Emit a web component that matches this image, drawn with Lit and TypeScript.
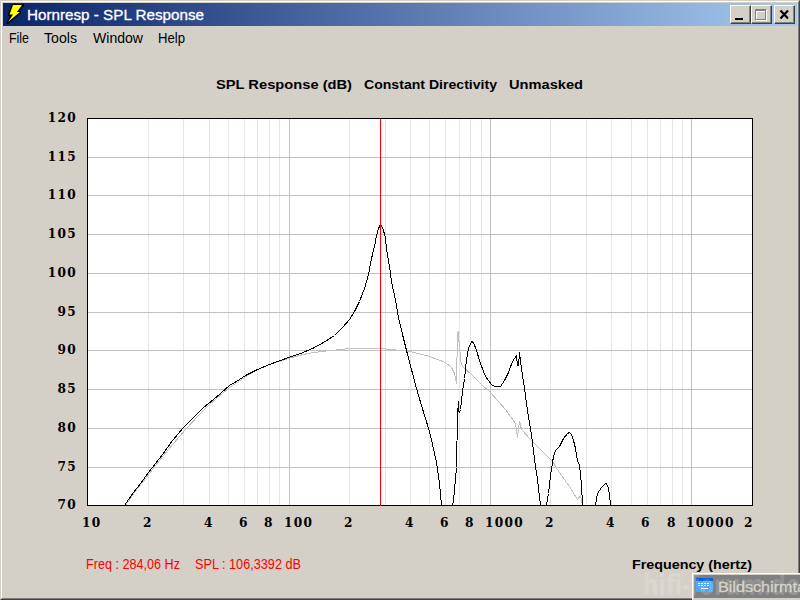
import { LitElement, html, svg, css } from "lit";
import { customElement } from "lit/decorators.js";

const MAJOR_X = [289, 490, 691];
const MINOR_X = [148, 183, 209, 228, 244, 257, 269, 279, 349, 385, 410, 429, 445, 459, 470, 481, 550, 586, 611, 631, 647, 660, 672, 682];
const MAJOR_Y = [157, 195, 234, 273, 312, 350, 389, 428, 467];
const LABELS_Y: [string, number][] = [["120", 118], ["115", 157], ["110", 195], ["105", 234], ["100", 273], ["95", 312], ["90", 350], ["85", 389], ["80", 428], ["75", 467], ["70", 505]];
const LABELS_X: [string, number][] = [["10", 82], ["2", 143], ["4", 204], ["6", 239], ["8", 264], ["100", 284], ["2", 344], ["4", 405], ["6", 440], ["8", 465], ["1000", 485], ["2", 545], ["4", 606], ["6", 641], ["8", 667], ["10000", 686], ["2", 744]];

const MAIN = [
  "124,505 128,499 133,492 140,483 148,472 155,463 162,454 172,440 183,427 193,417 203,407 213,399 220,393 229,385 236,381 245,375 257,369 269,364 280,360 291,356 300,353 312,348 323,342 334,335 342,327 349,319 354,311 359,301 364,288 368,274 371,258 374,246 376,235 378,228 380,224 382,227 385,237 386,249 389,266 391,281 395,300 398,317 403,338 407,354 411,369 416,388 421,405 425,418 429,431 432,444 436,462 439,483 441,505",
  "452,505 453,500 455,478 456,467 457,415 458,401 458,411 459,412 460,409 462,391 464,378 466,359 468,348 471,341 473,342 476,350 480,363 485,376 491,384 494,386 500,386 504,380 508,372 512,361 516,355 517,365 518,365 519,352 521,368 524,388 527,410 531,434 534,459 537,479 540,505",
  "546,505 548,493 550,475 553,456 555,450 559,446 563,438 567,433 569,432 571,434 573,440 575,448 577,461 579,464 581,484 582,505",
  "595,505 597,493 601,487 605,483 606,483 608,488 609,494 610,505",
];
const BASE = "125,505 134,492 149,473 162,456 173,443 185,429 198,415 209,404 229,387 238,381 247,375 257,369 269,364 291,357 307,353 321,351 340,349 350,348 380,348 390,349 410,351 429,356 445,362 451,367 454,373 456,383 457,332 458,331 458,340 459,342 460,360 462,366 471,374 481,384 490,392 505,409 515,423 517,437 519,421 521,429 530,439 540,449 553,462 555,466 561,475 569,486 577,499 580,495 582,505";

@customElement("response-chart")
class ResponseChart extends LitElement {
  static styles = css`
    :host { display: block; width: 753px; height: 434px; }
    svg { display: block; }
    .grid, .trace { fill: none; shape-rendering: crispEdges; stroke-width: 1; }
    .major { stroke: #c0c0c0; }
    .minor { stroke: #e6e6e6; }
    .main { stroke: #000; }
    .base { stroke: #c0c0c0; }
    .cursor { stroke: #f00; }
    .num { font: bold 13.5px "DejaVu Serif Condensed", "DejaVu Serif", serif; font-stretch: condensed; letter-spacing: 1.3px; }
    .y { text-anchor: end; }
  `;
  render() {
    return html`<svg width="800" height="434" viewBox="0 106 800 434">
      <rect x="87.5" y="118.5" width="665" height="387" fill="#fff"></rect>
      ${MINOR_X.map((x) => svg`<path class="grid minor" d="M${x + 0.5} 119V505"></path>`)}
      ${MAJOR_Y.map((y) => svg`<path class="grid major" d="M88 ${y + 0.5}H752"></path>`)}
      ${MAJOR_X.map((x) => svg`<path class="grid major" d="M${x + 0.5} 119V505"></path>`)}
      <polyline class="trace base" transform="translate(.5 .5)" points=${BASE}></polyline>
      ${MAIN.map((p) => svg`<polyline class="trace main" transform="translate(.5 .5)" points=${p}></polyline>`)}
      <rect class="grid main" x="87.5" y="118.5" width="665" height="387"></rect>
      <path class="grid cursor" d="M380.5 119V506"></path>
      ${LABELS_Y.map(([t, y]) => svg`<text class="num y" x="77" y=${y + 4}>${t}</text>`)}
      ${LABELS_X.map(([t, x]) => svg`<text class="num" x=${x} y="527">${t}</text>`)}
    </svg>`;
  }
}

@customElement("app-root")
class AppRoot extends LitElement {
  static styles = css`
    :host { display: block; position: relative; width: 800px; height: 600px; overflow: hidden; box-sizing: border-box; background: #d4d0c8; font: 14px "Liberation Sans", sans-serif; color: #000; }
    .window { box-sizing: border-box; width: 800px; height: 600px; border: 1px solid; border-color: #d4d0c8 #404040 #404040 #d4d0c8; }
    .inner { box-sizing: border-box; height: 598px; border: 1px solid; border-color: #fff #808080 #808080 #fff; padding: 1px; overflow: hidden; }
    .title { display: flex; align-items: center; height: 23px; background: linear-gradient(90deg, #0a246a, #a6caf0); color: #fff; padding-right: 2px; }
    .title svg { flex: none; }
    .icon-row { overflow: visible; }
    .name { flex: 1; }
    .btn { box-sizing: border-box; width: 21px; height: 19px; background: #d4d0c8; border: 1px solid; border-color: #fff #404040 #404040 #fff; box-shadow: inset -1px -1px #808080; }
    .btn svg { display: block; }
    .close { margin-left: 2px; }
    .menu { display: flex; height: 25px; align-items: center; }
    .heading { height: 55px; }
    text { white-space: pre; }
    .h { font: bold 13.5px "Liberation Sans", sans-serif; }
    .r { font: 14px "Liberation Sans", sans-serif; fill: #f00; }
    .t { font: 14px "Liberation Sans", sans-serif; }
    .cap { font: 15px "Liberation Sans", sans-serif; fill: #fff; stroke: #fff; stroke-width: .3px; }
    .wm { font: bold 29px "Noto Sans", sans-serif; fill: #fff; fill-opacity: .16; }
    .chart, .foot { margin-left: -3px; }
    .foot svg, .heading svg, .menu svg { display: block; }
    .menu svg, .heading svg { margin-left: -3px; flex: none; }
    .task { position: absolute; left: 692px; top: 573px; width: 108px; height: 27px; }
    .mark { position: absolute; left: 640px; top: 568px; width: 160px; height: 32px; }
    .task svg, .mark svg { display: block; }
    .tt { font: 15px "Liberation Sans", sans-serif; fill: #d4d0c8; stroke: #d4d0c8; stroke-width: .3px; }
  `;
  render() {
    return html`<div class="window"><div class="inner">
      <div class="title">
        <svg class="icon-row" width="200" height="23" viewBox="3 3 200 23">
          <path d="M12 4H24V6L19 11H21V13L8 24H6L10 16H8V14Z" fill="#000"></path>
          <path d="M13 5H22L17 12H20L8 22L13 14.5H9.5Z" fill="#ff0"></path>
          <text class="cap" x="27" y="20" textLength="177" lengthAdjust="spacingAndGlyphs">Hornresp - SPL Response</text>
        </svg>
        <span class="name"></span>
        <div class="btn"><svg width="19" height="17" shape-rendering="crispEdges"><path d="M4 12h8v2H4z"></path></svg></div>
        <div class="btn"><svg width="19" height="17" fill="none" shape-rendering="crispEdges"><path d="M4.500 4.500h10v10h-10z M5 5.500h9" stroke="#fff"></path><path d="M3.500 3.500h10v10h-10z M4 4.500h9" stroke="#808080"></path></svg></div>
        <div class="btn close"><svg width="19" height="17" fill="none" stroke="#000"><path d="M5.500 4.500L13 12.500M13 4.500L5.500 12.500" stroke-width="2.200"></path></svg></div>
      </div>
      <div class="menu"><svg width="300" height="25" viewBox="0 26 300 25">
        <text class="t" x="9" y="43" textLength="20" lengthAdjust="spacingAndGlyphs">File</text>
        <text class="t" x="44" y="43" textLength="33" lengthAdjust="spacingAndGlyphs">Tools</text>
        <text class="t" x="93" y="43" textLength="50" lengthAdjust="spacingAndGlyphs">Window</text>
        <text class="t" x="158" y="43" textLength="27" lengthAdjust="spacingAndGlyphs">Help</text>
      </svg></div>
      <div class="heading"><svg width="790" height="55" viewBox="0 51 790 55">
        <text class="h" x="216" y="89" textLength="136" lengthAdjust="spacingAndGlyphs">SPL Response (dB)</text>
        <text class="h" x="364" y="89" textLength="133" lengthAdjust="spacingAndGlyphs">Constant Directivity</text>
        <text class="h" x="509" y="89" textLength="74" lengthAdjust="spacingAndGlyphs">Unmasked</text>
      </svg></div>
      <response-chart class="chart"></response-chart>
      <div class="foot"><svg width="800" height="57" viewBox="0 540 800 57">
        <text class="r" x="86" y="569" textLength="94" lengthAdjust="spacingAndGlyphs">Freq : 284,06 Hz</text>
        <text class="r" x="195" y="569" textLength="106" lengthAdjust="spacingAndGlyphs">SPL : 106,3392 dB</text>
        <text class="h" x="632" y="569" textLength="120" lengthAdjust="spacingAndGlyphs">Frequency (hertz)</text>
      </svg></div>
    </div></div>
    <div class="task"><svg width="108" height="27">
      <rect width="108" height="27" fill="#d4d0c8"></rect>
      <path d="M0 .5H108M.5 0V27" stroke="#fff" shape-rendering="crispEdges"></path>
      <rect x="2" y="2" width="106" height="23" fill="#808080"></rect>
      <rect x="4" y="5" width="17" height="14" rx="1" fill="#4aa8f5"></rect>
      <path d="M4 5h17v3H4z" fill="#0a62d0"></path>
      <path d="M6 10.5h12M6 12.5h12" stroke="#fff" stroke-dasharray="2 1"></path><path d="M9 15.5h7" stroke="#fff"></path>
      <text class="tt" x="26" y="19" textLength="88" lengthAdjust="spacingAndGlyphs">Bildschirmta</text>
    </svg></div>
    <div class="mark"><svg width="160" height="32">
      <text class="wm" x="3" y="27" textLength="157" lengthAdjust="spacingAndGlyphs">hifi-forum.de</text>
    </svg></div>`;
  }
}
